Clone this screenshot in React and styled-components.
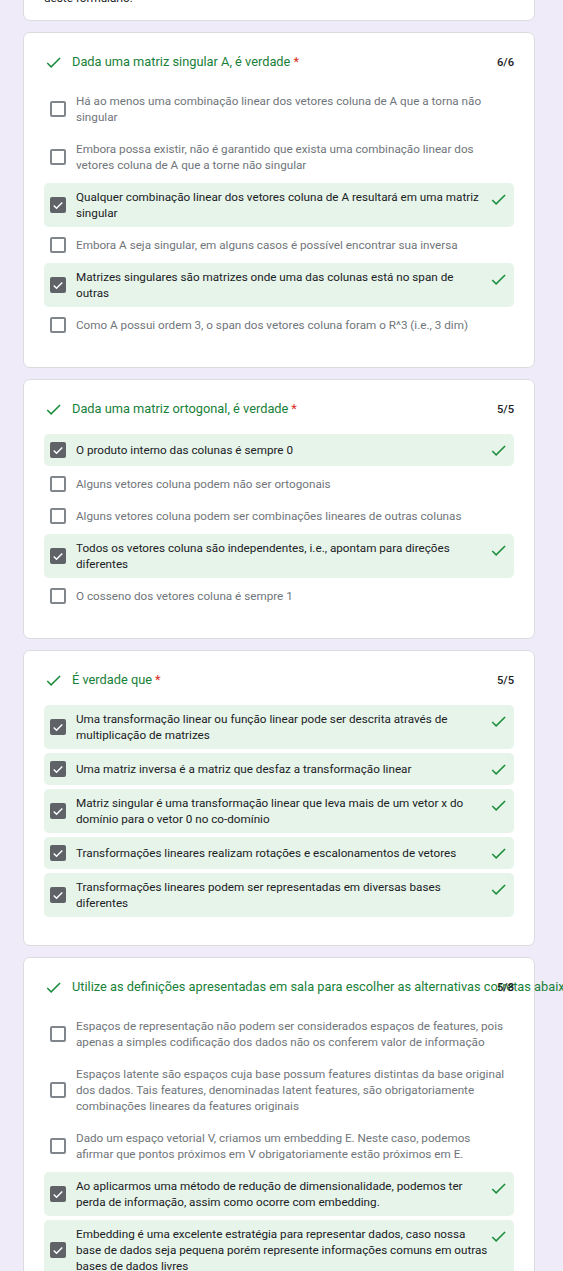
import React from "react";
import styled, { createGlobalStyle } from "styled-components";

const Global = createGlobalStyle`
  html, body {
    margin: 0;
    padding: 0;
    overflow: hidden;
    background: #f0ebf8;
  }
  body {
    font-family: Roboto, "Noto Sans", Arial, sans-serif;
    -webkit-font-smoothing: antialiased;
  }
`;

const Page = styled.div`
  height: 1271px;
  overflow: hidden;
  background: #f0ebf8;
`;

const Column = styled.div`
  display: flex;
  flex-direction: column;
  gap: 11px;
  width: 512px;
  margin: -47px 0 0 23px;
`;

const Card = styled.section`
  box-sizing: border-box;
  background: #fff;
  border: 1px solid #dadce0;
  border-radius: 7px;
  padding: ${(p) => (p.$intro ? "20px 20px 14px" : "19px 20px 28px")};
`;

const IntroText = styled.p`
  margin: 0;
  font-size: 11.7px;
  line-height: 16px;
  color: #202124;
`;

const Header = styled.div`
  display: flex;
  align-items: center;
  height: 20px;
  margin-bottom: 15px;
`;

const HeaderIcon = styled.span`
  display: flex;
  flex-shrink: 0;
  width: 19px;
  height: 19px;
  margin-right: 9px;
`;

const Title = styled.div`
  flex: 1;
  min-width: 0;
  white-space: nowrap;
  font-size: 12.8px;
  line-height: 20px;
  color: #188038;
`;

const Star = styled.span`
  color: #d93025;
  margin-left: 3px;
`;

const Score = styled.div`
  flex-shrink: 0;
  font-size: 11.2px;
  font-weight: 500;
  color: #202124;
`;

const Options = styled.div`
  display: flex;
  flex-direction: column;
  gap: 4px;
`;

const Row = styled.div`
  display: flex;
  align-items: center;
  padding: 6px 6px;
  border-radius: 5px;
  background: ${(p) => (p.$checked ? "#e6f4ea" : "transparent")};
`;

const Box = styled.span`
  box-sizing: border-box;
  flex-shrink: 0;
  width: 16px;
  height: 16px;
  margin-right: 10px;
  border-radius: 2px;
  border: 2px solid ${(p) => (p.$checked ? "#5f6368" : "#80868b")};
  background: ${(p) => (p.$checked ? "#5f6368" : "#fff")};
  display: flex;
  align-items: center;
  justify-content: center;
`;

const Label = styled.div`
  flex: 1;
  min-width: 0;
  font-size: 11.7px;
  line-height: 16px;
  color: ${(p) => (p.$checked ? "#202124" : "#70757a")};
`;

const RowIcon = styled.span`
  display: flex;
  flex-shrink: 0;
  align-self: flex-start;
  width: 19px;
  height: 20px;
  align-items: center;
`;

const CheckIcon = ({ size = 19 }) => (
  <svg width={size} height={size} viewBox="0 0 24 24" aria-hidden="true">
    <path
      fill="#1e8e3e"
      d="M9 16.17L4.83 12l-1.42 1.41L9 19 21 7l-1.41-1.41z"
    />
  </svg>
);

const BoxTick = () => (
  <svg width="12" height="12" viewBox="0 0 24 24" aria-hidden="true">
    <path fill="#fff" d="M9 16.6L4.4 12l-2 2L9 20.6 21.6 8l-2-2z" />
  </svg>
);

const questions = [
  {
    title: "Dada uma matriz singular A, é verdade",
    score: "6/6",
    options: [
      [false, "Há ao menos uma combinação linear dos vetores coluna de A que a torna não singular"],
      [false, "Embora possa existir, não é garantido que exista uma combinação linear dos vetores coluna de A que a torne não singular"],
      [true, "Qualquer combinação linear dos vetores coluna de A resultará em uma matriz singular"],
      [false, "Embora A seja singular, em alguns casos é possível encontrar sua inversa"],
      [true, "Matrizes singulares são matrizes onde uma das colunas está no span de outras"],
      [false, "Como A possui ordem 3, o span dos vetores coluna foram o R^3 (i.e., 3 dim)"],
    ],
  },
  {
    title: "Dada uma matriz ortogonal, é verdade",
    score: "5/5",
    options: [
      [true, "O produto interno das colunas é sempre 0"],
      [false, "Alguns vetores coluna podem não ser ortogonais"],
      [false, "Alguns vetores coluna podem ser combinações lineares de outras colunas"],
      [true, "Todos os vetores coluna são independentes, i.e., apontam para direções diferentes"],
      [false, "O cosseno dos vetores coluna é sempre 1"],
    ],
  },
  {
    title: "É verdade que",
    score: "5/5",
    options: [
      [true, "Uma transformação linear ou função linear pode ser descrita através de multiplicação de matrizes"],
      [true, "Uma matriz inversa é a matriz que desfaz a transformação linear"],
      [true, "Matriz singular é uma transformação linear que leva mais de um vetor x do domínio para o vetor 0 no co-domínio"],
      [true, "Transformações lineares realizam rotações e escalonamentos de vetores"],
      [true, "Transformações lineares podem ser representadas em diversas bases diferentes"],
    ],
  },
  {
    title: "Utilize as definições apresentadas em sala para escolher as alternativas corretas abaixo",
    score: "5/8",
    options: [
      [false, "Espaços de representação não podem ser considerados espaços de features, pois apenas a simples codificação dos dados não os conferem valor de informação"],
      [false, "Espaços latente são espaços cuja base possum features distintas da base original dos dados. Tais features, denominadas latent features, são obrigatoriamente combinações lineares da features originais"],
      [false, "Dado um espaço vetorial V, criamos um embedding E. Neste caso, podemos afirmar que pontos próximos em V obrigatoriamente estão próximos em E."],
      [true, "Ao aplicarmos uma método de redução de dimensionalidade, podemos ter perda de informação, assim como ocorre com embedding."],
      [true, "Embedding é uma excelente estratégia para representar dados, caso nossa base de dados seja pequena porém represente informações comuns em outras bases de dados livres"],
    ],
  },
];

const Question = ({ q }) => (
  <Card>
    <Header>
      <HeaderIcon>
        <CheckIcon />
      </HeaderIcon>
      <Title>
        {q.title}
        <Star>*</Star>
      </Title>
      <Score>{q.score}</Score>
    </Header>
    <Options>
      {q.options.map(([checked, text], i) => (
        <Row key={i} $checked={checked}>
          <Box $checked={checked}>{checked && <BoxTick />}</Box>
          <Label $checked={checked}>{text}</Label>
          {checked && (
            <RowIcon>
              <CheckIcon />
            </RowIcon>
          )}
        </Row>
      ))}
    </Options>
  </Card>
);

export default function App() {
  return (
    <Page>
      <Global />
      <Column>
        <Card $intro>
          <IntroText>
            As respostas serão registradas e a pontuação será exibida ao final
          </IntroText>
          <IntroText>deste formulário.</IntroText>
        </Card>
        {questions.map((q, i) => (
          <Question key={i} q={q} />
        ))}
      </Column>
    </Page>
  );
}
